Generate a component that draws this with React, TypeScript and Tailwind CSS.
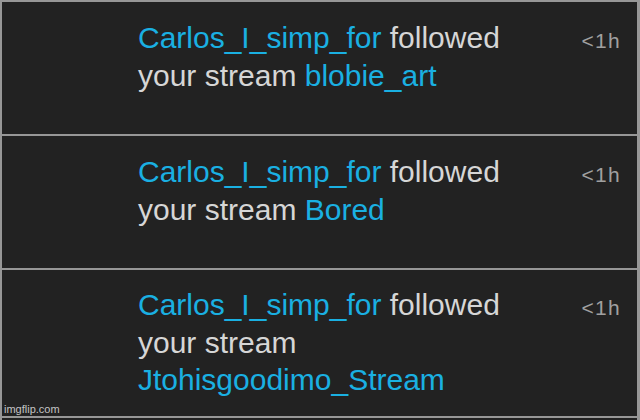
import React from 'react';

interface Notice {
  user: string;
  stream: string;
  rowClass: string;
}

const notices: Notice[] = [
  { user: 'Carlos_I_simp_for', stream: 'blobie_art', rowClass: 'h-[134px] pt-[17px]' },
  { user: 'Carlos_I_simp_for', stream: 'Bored', rowClass: 'h-[134px] pt-[17px]' },
  { user: 'Carlos_I_simp_for', stream: 'Jtohisgoodimo_Stream', rowClass: 'h-[148px] pt-[16px]' },
];

const NoticeRow: React.FC<{ notice: Notice }> = ({ notice }) => (
  <div className={`flex items-baseline border-b-2 border-[#979797] pl-[136px] pr-[16px] ${notice.rowClass}`}>
    <p className="w-[400px] text-[30px] leading-[37.5px] text-[#d6d6d6]">
      <span className="text-[#1ab0e2]">{notice.user}</span> followed your stream{' '}
      <span className="text-[#1ab0e2]">{notice.stream}</span>
    </p>
    <span className="ml-auto text-[21px] tracking-[1.3px] text-[#a0a0a0]">{'<1h'}</span>
  </div>
);

export default function App() {
  return (
    <div className="relative h-[420px] w-[640px] overflow-hidden border-t-2 border-l-2 border-r-[3px] border-[#979797] bg-[#222222] font-['Liberation_Sans',Arial,sans-serif]">
      {notices.map((n, i) => (
        <NoticeRow key={i} notice={n} />
      ))}
      {/* watermark */}
      <span className="absolute bottom-[5px] left-[2px] text-[11px] leading-none text-[#c4c4c4]">imgflip.com</span>
    </div>
  );
}
